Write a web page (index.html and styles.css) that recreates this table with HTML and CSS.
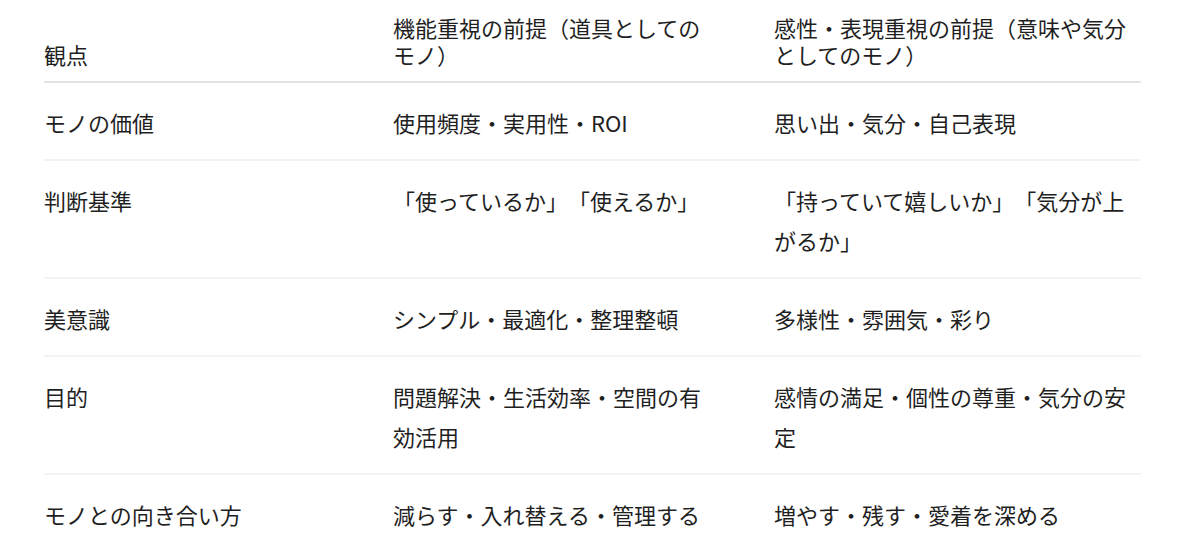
FILE: index.html
```html
<!DOCTYPE html>
<html lang="ja">
<head>
<meta charset="utf-8">
<link rel="stylesheet" href="styles.css">
</head>
<body>
<div class="wrap">
<table class="cmp">
  <colgroup>
    <col class="c1">
    <col class="c2">
    <col class="c3">
  </colgroup>
  <thead>
    <tr>
      <th>観点</th>
      <th class="mid">機能重視の前提（道具としてのモノ）</th>
      <th>感性・表現重視の前提（意味や気分としてのモノ）</th>
    </tr>
  </thead>
  <tbody>
    <tr>
      <td>モノの価値</td>
      <td class="mid">使用頻度・実用性・ROI</td>
      <td>思い出・気分・自己表現</td>
    </tr>
    <tr>
      <td>判断基準</td>
      <td class="mid">「使っているか」「使えるか」</td>
      <td>「持っていて嬉しいか」「気分が上がるか」</td>
    </tr>
    <tr>
      <td>美意識</td>
      <td class="mid">シンプル・最適化・整理整頓</td>
      <td>多様性・雰囲気・彩り</td>
    </tr>
    <tr>
      <td>目的</td>
      <td class="mid">問題解決・生活効率・空間の有効活用</td>
      <td>感情の満足・個性の尊重・気分の安定</td>
    </tr>
    <tr>
      <td>モノとの向き合い方</td>
      <td class="mid">減らす・入れ替える・管理する</td>
      <td>増やす・残す・愛着を深める</td>
    </tr>
  </tbody>
</table>
</div>
</body>
</html>
```

FILE: styles.css
```css
html, body {
  margin: 0;
  padding: 0;
  background: #ffffff;
}

body {
  font-family: "Noto Sans CJK JP", "Noto Sans", sans-serif;
  color: #1f1f1f;
  font-size: 22px;
  text-spacing-trim: space-all;
  font-feature-settings: "palt" 0, "halt" 0;
}

.wrap {
  padding: 0 59px 0 44px;
}

.cmp {
  width: 1097px;
  border-collapse: collapse;
  table-layout: fixed;
}

.c1 { width: 349px; }
.c2 { width: 381px; }
.c3 { width: 367px; }

.cmp th {
  font-weight: 400;
  text-align: left;
  vertical-align: bottom;
  line-height: 27px;
  padding: 14px 0 13px 0;
  border-bottom: 2px solid #e4e4e4;
}

.cmp td {
  font-weight: 400;
  text-align: left;
  vertical-align: top;
  line-height: 40px;
  padding: 19px 0 17px 0;
  border-bottom: 2px solid #f3f3f3;
}

.cmp tbody tr:last-child td {
  border-bottom: none;
}

.cmp .mid {
  padding-right: 58px;
}
```
